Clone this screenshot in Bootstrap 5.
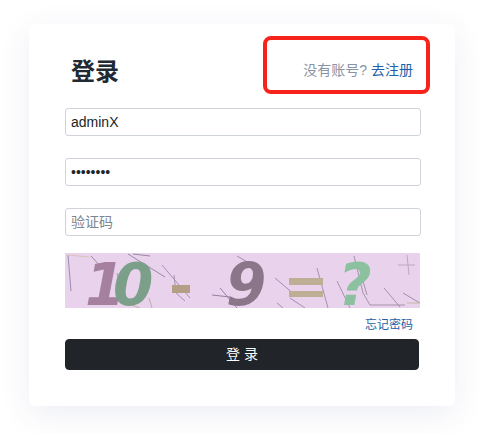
<!DOCTYPE html>
<html lang="zh">
<head>
<meta charset="utf-8">
<link rel="stylesheet" href="https://cdn.jsdelivr.net/npm/bootstrap@5.3.0/dist/css/bootstrap.min.css">
<style>
html,body{background:#fff;overflow:hidden}
body{font-family:"Liberation Sans","Noto Sans CJK SC",sans-serif;font-size:14px;position:relative;height:434px}
.login-box{margin:24px 0 0 29px;width:426px;height:382px;border:0;border-radius:6px;box-shadow:0 8px 32px rgba(60,70,130,.09);padding:28px 34px 0 36px}
.head-row{height:56px;padding:0 8px 0 6px}
.login-title{font-size:24px;font-weight:700;color:#212933;line-height:40px;margin:0}
.reg-line{font-size:14px;color:#8a93a5;line-height:20px;margin-top:8px}
.reg-line a,.forgot-link{color:#1d5fa8;text-decoration:none}
.login-input{height:28px;width:356px;padding:0 5px;font-size:14px;border:1px solid #ced4da;border-radius:3px;color:#212529;margin-bottom:22px}
.login-input::placeholder{color:#7d8590}
.login-input.last-input{margin-bottom:17px}
.captcha-pic{display:block;width:355px;height:55px}
.forgot-row{font-size:12px;line-height:18px;margin:8px 8px 5px 0;text-align:right}
.login-btn{width:354px;height:31px;padding:0;font-size:14px;background:#212529;border-radius:4px}
.red-mark{position:absolute;left:263px;top:36px;width:167px;height:58px;border:4px solid #f6231b;border-radius:8px}
</style>
</head>
<body>
<div class="card login-box">
  <div class="head-row d-flex justify-content-between align-items-start">
    <h3 class="login-title">登录</h3>
    <div class="reg-line">没有账号? <a href="#">去注册</a></div>
  </div>
  <input class="form-control login-input" value="adminX">
  <input class="form-control login-input" type="password" value="12345678">
  <input class="form-control login-input last-input" placeholder="验证码">
  <svg class="captcha-pic" viewBox="0 0 355 55">
    <rect width="355" height="55" fill="#e8d2ec"/>
    <g fill="none" stroke-width="1">
      <path d="M3 2L6 38" stroke="#9a8db0"/>
      <path d="M3 2L24 4" stroke="#d8c4b4"/>
      <path d="M26 3L37 15M63 1L100 24M68 1L85 3" stroke="#9a8aa8"/>
      <path d="M97 12L125 45M109 22L111 40L120 48" stroke="#a592b2"/>
      <path d="M61 50L75 55M84 45L87 55" stroke="#c0aea0"/>
      <path d="M40 20L48 23M52 20L57 42" stroke="#ae96b0"/>
      <path d="M155 35L172 55M147 42L165 44" stroke="#8f82a4"/>
      <path d="M172 3L184 10M210 25L230 42M225 45L240 55" stroke="#a090ae"/>
      <path d="M252 15L263 55M272 28L285 55M289 3L298 40L305 52L340 52M319 35L335 54M295 18L302 42" stroke="#a592ad"/>
      <path d="M333 12L350 12M342 2L344 22" stroke="#bca9bc"/>
      <path d="M338 40L355 50" stroke="#a090a8"/>
      <path d="M342 50L355 50" stroke="#c8b8a2"/>
      <path d="M212 50L218 55" stroke="#a090ae"/>
    </g>
    <g font-family="'DejaVu Sans',sans-serif" font-weight="700" font-style="italic" font-size="58">
      <text x="20" y="52" fill="#a5809f">1</text>
      <text x="48" y="52" fill="#7b9f89">0</text>
      <text x="161" y="52" fill="#8a7589">9</text>
      <text x="273" y="52" fill="#8cc1a0">?</text>
    </g>
    <rect x="107" y="32" width="18" height="8" fill="#b59e86"/>
    <rect x="224" y="25" width="34" height="7" fill="#bfae96"/>
    <rect x="224" y="38" width="34" height="6" fill="#bfae96"/>
  </svg>
  <div class="forgot-row"><a class="forgot-link" href="#">忘记密码</a></div>
  <button class="btn btn-dark login-btn" type="button">登 录</button>
</div>
<div class="red-mark"></div>
<script src="https://cdn.jsdelivr.net/npm/bootstrap@5.3.0/dist/js/bootstrap.bundle.min.js"></script>
</body>
</html>
